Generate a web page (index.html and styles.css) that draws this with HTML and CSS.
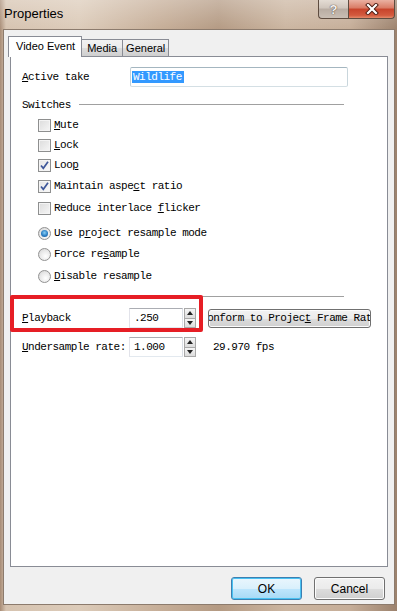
FILE: index.html
```html
<!DOCTYPE html>
<html>
<head>
<meta charset="utf-8">
<link rel="stylesheet" href="styles.css">
</head>
<body>
<div class="window">
  <div class="titlebar">
    <span class="title">Properties</span>
    <div class="caption-btns">
      <div class="cbtn help">?</div>
      <div class="cbtn close">
        <svg width="16" height="12" viewBox="0 0 16 12"><path d="M4 2 L12 10 M12 2 L4 10" stroke="#4a1a10" stroke-width="4" stroke-linecap="square"/><path d="M4 2 L12 10 M12 2 L4 10" stroke="#ffffff" stroke-width="2.2" stroke-linecap="square"/></svg>
      </div>
    </div>
  </div>
  <div class="client">
    <div class="tabs">
      <div class="tab active">Video Event</div>
      <div class="tab">Media</div>
      <div class="tab">General</div>
    </div>
    <div class="panel">
      <div class="row take-row">
        <span class="label take-label"><u>A</u>ctive take</span>
        <div class="textbox wide"><span class="sel">Wildlife</span></div>
      </div>
      <div class="group-head">
        <span>Switches</span>
        <span class="rule"></span>
      </div>
      <div class="options">
        <div class="opt"><span class="check"></span><span><u>M</u>ute</span></div>
        <div class="opt"><span class="check"></span><span><u>L</u>ock</span></div>
        <div class="opt"><span class="check on"><svg width="11" height="11" viewBox="0 0 11 11"><path d="M2 5.5 L4.3 8.3 L9 1.8" fill="none" stroke="#3d5699" stroke-width="1.7"/></svg></span><span>Loo<u>p</u></span></div>
        <div class="opt gap1"><span class="check on"><svg width="11" height="11" viewBox="0 0 11 11"><path d="M2 5.5 L4.3 8.3 L9 1.8" fill="none" stroke="#3d5699" stroke-width="1.7"/></svg></span><span>Maintain aspe<u>c</u>t ratio</span></div>
        <div class="opt gap2"><span class="check"></span><span>Reduce interlace <u>f</u>licker</span></div>
        <div class="opt radios-start"><span class="radio on"></span><span>Use p<u>r</u>oject resample mode</span></div>
        <div class="opt gap1"><span class="radio"></span><span>Force re<u>s</u>ample</span></div>
        <div class="opt gap2"><span class="radio"></span><span><u>D</u>isable resample</span></div>
      </div>
      <div class="separator"></div>
      <div class="row num-row first">
        <span class="label num-label"><u>P</u>layback</span>
        <div class="textbox num">.250</div>
        <div class="spin"><span class="up"></span><span class="down"></span></div>
        <div class="push"><span>Conform to Projec<u>t</u> Frame Rate</span></div>
      </div>
      <div class="row num-row second">
        <span class="label num-label"><u>U</u>ndersample rate:</span>
        <div class="textbox num">1.000</div>
        <div class="spin"><span class="up"></span><span class="down"></span></div>
        <span class="fps">29.970 fps</span>
      </div>
    </div>
    <div class="footer">
      <div class="btn default">OK</div>
      <div class="btn">Cancel</div>
    </div>
  </div>
  <div class="highlight-box"></div>
</div>
</body>
</html>
```

FILE: styles.css
```css
* { box-sizing: border-box; }
html, body { margin: 0; padding: 0; }
body { width: 397px; height: 611px; overflow: hidden; background: #fff; }

.window {
  position: relative;
  width: 397px;
  height: 611px;
  display: flex;
  flex-direction: column;
  padding: 0 2px 6px 3px;
  background:
    linear-gradient(180deg, rgba(255,255,255,0.28) 0%, rgba(255,255,255,0) 30px),
    linear-gradient(90deg, #a88c76 0px, #d6c3b0 6px, #dccbb9 20%, #c6ae98 40%, #b49a83 55%, #cbb5a0 72%, #c6ae99 88%, #9c826d 100%);
  font-family: "Liberation Mono", "DejaVu Sans Mono", monospace;
}

.titlebar {
  height: 29px;
  display: flex;
  align-items: flex-start;
}
.title {
  font-family: "Liberation Sans", Arial, sans-serif;
  font-size: 13px;
  color: #000;
  line-height: 28px;
  padding-left: 1px;
}
.caption-btns { margin-left: auto; display: flex; }
.cbtn {
  height: 19px;
  border: 1px solid #5e4c40;
  border-top: none;
  display: flex;
  align-items: center;
  justify-content: center;
}
.help {
  width: 30px;
  border-right: none;
  border-radius: 0 0 0 4px;
  background: linear-gradient(180deg, #e4dcd4 0%, #cfc5bc 45%, #b8aca2 50%, #c9beb4 100%);
  font-family: "Liberation Sans", Arial, sans-serif;
  font-weight: bold;
  font-size: 13px;
  color: #f4f1ee;
  text-shadow: 0 0 1px #5a4a40, 0 0 1px #5a4a40;
}
.close {
  width: 47px;
  border-radius: 0 0 4px 0;
  background: linear-gradient(180deg, #eab1a2 0%, #d97a64 45%, #c7432b 50%, #d35a3e 85%, #e48a6a 100%);
}

.client {
  flex: 1;
  background: #f0f0f0;
  border: 1px solid #8c7b6d;
  padding: 7px 7px 0 5px;
  display: flex;
  flex-direction: column;
}

.tabs {
  display: flex;
  align-items: flex-end;
  height: 19px;
  font-family: "Liberation Sans", Arial, sans-serif;
  font-size: 11px;
  position: relative;
  z-index: 1;
}
.tab {
  height: 17px;
  padding: 0 5px;
  border: 1px solid #898c95;
  border-bottom: none;
  margin-left: -1px;
  background: linear-gradient(180deg, #f2f2f2 0%, #ebebeb 50%, #dddddd 51%, #cfcfcf 100%);
  line-height: 16px;
  color: #000;
}
.tab:last-child { padding: 0 3px; }
.tab.active {
  height: 21px;
  margin-left: -1px;
  margin-bottom: -1px;
  margin-right: -1px;
  padding: 0 6px 0 7px;
  background: #fff;
  line-height: 19px;
  position: relative;
  z-index: 2;
}
.tab.active + .tab { margin-left: 0; }

.panel {
  width: 378px;
  height: 511px;
  margin-left: 1px;
  background: #fff;
  border: 1px solid #898c95;
  padding: 10px 0 0 11px;
  font-size: 11px;
  letter-spacing: -0.5px;
  color: #000;
}
u { text-decoration: underline; text-underline-offset: 1px; }

.row { display: flex; align-items: center; height: 20px; }
.label { white-space: nowrap; }
.take-label { width: 108px; }
.textbox {
  height: 20px;
  border: 1px solid #abadb3;
  border-color: #abadb3 #dbdfe6 #e3e9ef #e2e3ea;
  background: #fff;
  display: flex;
  align-items: center;
}
.textbox.wide { width: 218px; padding-left: 1px; border-radius: 2px; border-color: #a4b6c0 #c9d6dc #d4dfe4 #c4d1d8; }
.sel {
  background: #3399ff;
  color: #fff;
  padding: 0 2px 0 1px;
  line-height: 12px;
}

.group-head {
  display: flex;
  align-items: center;
  height: 15px;
  margin-top: 10px;
  width: 322px;
}
.rule { flex: 1; height: 1px; background: #a0a0a0; margin-left: 8px; }

.options { margin-top: 3px; padding-left: 16px; }
.opt { display: flex; align-items: center; height: 20px; white-space: nowrap; }
.opt.gap1 { margin-top: 1px; }
.opt.gap2 { margin-top: 2px; }
.opt.radios-start { margin-top: 5px; }

.check {
  width: 13px; height: 13px;
  border: 1px solid #8e8f8f;
  background: linear-gradient(135deg, #dcdcdc 0%, #f6f6f6 100%);
  box-shadow: inset 0 0 0 1px #f4f4f4;
  margin-right: 3px;
  display: flex; align-items: center; justify-content: center;
  flex: none;
}
.check.on { background: linear-gradient(135deg, #e4e4e4 0%, #fafafa 100%); }

.radio {
  width: 13px; height: 13px;
  border-radius: 50%;
  border: 1px solid #929292;
  background: radial-gradient(circle at 60% 65%, #ffffff 0%, #e8e8e8 55%, #cfcfcf 100%);
  margin-right: 3px;
  flex: none;
  position: relative;
}
.radio.on::after {
  content: "";
  position: absolute;
  left: 2px; top: 2px;
  width: 7px; height: 7px;
  border-radius: 50%;
  background: radial-gradient(circle at 50% 40%, #8ad0f5 0%, #2b7fc4 55%, #1d4f8a 100%);
}

.separator { width: 322px; height: 1px; background: #a0a0a0; margin-top: 10px; }

.num-row.first { margin-top: 11px; }
.num-row.second { margin-top: 9px; }
.num-label { width: 107px; }
.textbox.num { width: 54px; padding-left: 4px; }
.spin {
  width: 12px; height: 20px;
  margin-left: 1px;
  display: flex; flex-direction: column;
}
.spin span {
  flex: 1;
  border: 1px solid #a8a8a8;
  background: linear-gradient(180deg, #f6f6f6, #dcdcdc);
  position: relative;
}
.spin .down { border-top: none; }
.spin .up::after, .spin .down::after {
  content: "";
  position: absolute;
  left: 2px;
  border-left: 3px solid transparent;
  border-right: 3px solid transparent;
}
.spin .up::after { top: 2px; border-bottom: 4px solid #222; }
.spin .down::after { top: 2px; border-top: 4px solid #222; }

.push {
  width: 163px; height: 19px;
  margin-left: 12px;
  border: 1px solid #707070;
  border-radius: 3px;
  background: linear-gradient(180deg, #f2f2f2 0%, #ebebeb 50%, #dddddd 51%, #cfcfcf 100%);
  box-shadow: inset 0 0 0 1px #fcfcfc;
  display: flex; align-items: center; justify-content: center;
  overflow: hidden;
  white-space: nowrap;
}
.push span { flex: none; }
.fps { margin-left: 17px; white-space: nowrap; }

.footer {
  display: flex;
  justify-content: flex-end;
  gap: 12px;
  padding-top: 10px;
  padding-right: 2px;
}
.btn {
  width: 71px; height: 23px;
  border: 1px solid #707070;
  border-radius: 3px;
  background: linear-gradient(180deg, #f2f2f2 0%, #ebebeb 50%, #dddddd 51%, #cfcfcf 100%);
  box-shadow: inset 0 0 0 1px #fcfcfc;
  font-family: "Liberation Sans", Arial, sans-serif;
  font-size: 12px;
  display: flex; align-items: center; justify-content: center;
  color: #000;
}
.btn.default {
  border-color: #3c7fb1;
  background: linear-gradient(180deg, #eaf6fd 0%, #d9f0fc 50%, #bee6fd 51%, #a7d9f5 100%);
  box-shadow: inset 0 0 0 1px #48c1f2;
}

.highlight-box {
  position: absolute;
  left: 10px; top: 295px;
  width: 193px; height: 37px;
  border: 4px solid #e61e25;
  border-radius: 2px;
}
```
